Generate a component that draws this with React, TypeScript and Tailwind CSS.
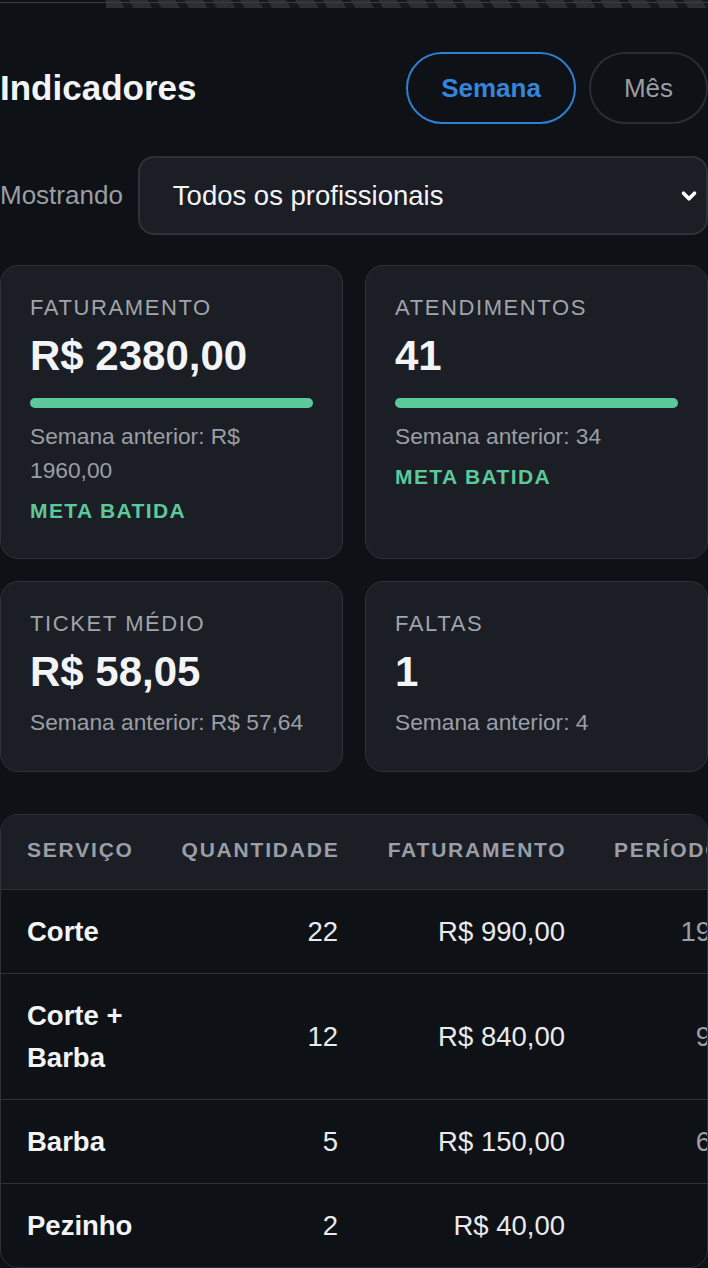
import { ChevronDown } from 'lucide-react';

const kpis = [
  {
    label: 'Faturamento',
    value: 'R$ 2380,00',
    previous: 'Semana anterior: R$ 1960,00',
    progress: 100,
    hit: true,
  },
  {
    label: 'Atendimentos',
    value: '41',
    previous: 'Semana anterior: 34',
    progress: 100,
    hit: true,
  },
  {
    label: 'Ticket médio',
    value: 'R$ 58,05',
    previous: 'Semana anterior: R$ 57,64',
  },
  {
    label: 'Faltas',
    value: '1',
    previous: 'Semana anterior: 4',
  },
];

const rows = [
  { name: 'Corte', qty: '22', total: 'R$ 990,00', prev: '19' },
  { name: 'Corte + Barba', qty: '12', total: 'R$ 840,00', prev: '9' },
  { name: 'Barba', qty: '5', total: 'R$ 150,00', prev: '6' },
  { name: 'Pezinho', qty: '2', total: 'R$ 40,00', prev: '' },
];

type Kpi = (typeof kpis)[number];

function KpiCard({ kpi }: { kpi: Kpi }) {
  return (
    <div className="rounded-[18px] border border-[#2e3238] bg-[#1b1e24] px-[29px] pt-[27px] pb-[32px]">
      <div className="text-[22px] leading-[30px] uppercase tracking-[1.6px] text-[#a0a4ab]">
        {kpi.label}
      </div>
      <div className="mt-[8px] text-[42px] leading-[50px] font-bold text-[#f3f4f6]">{kpi.value}</div>
      {kpi.progress !== undefined && (
        <div className="mt-[17px] h-[10px] rounded-full bg-[#2e3238]">
          <div className="h-full rounded-full bg-[#5bc99a]" style={{ width: `${kpi.progress}%` }} />
        </div>
      )}
      <div
        className={
          kpi.progress !== undefined
            ? 'mt-[11px] text-[22.75px] leading-[34px] text-[#9a9ea6]'
            : 'mt-[8px] text-[22.75px] leading-[34px] text-[#9a9ea6]'
        }
      >
        {kpi.previous}
      </div>
      {kpi.hit && (
        <div className="mt-[9px] text-[21px] leading-[30px] font-bold tracking-[1.4px] text-[#5bc99a]">
          META BATIDA
        </div>
      )}
    </div>
  );
}

export default function App() {
  return (
    <div className="min-h-[1268px] bg-[#0e1115] font-['Liberation_Sans',Arial,sans-serif] text-[#f3f4f6]">
      <div className="relative h-[8px]">
        <div className="ml-[106px] h-full bg-[repeating-linear-gradient(60deg,#2b2f35_0px,#2b2f35_16px,#15181c_16px,#15181c_24px)]" />
        <div className="absolute left-0 right-0 top-[2px] h-px bg-[#3a3e44]" />
      </div>

      <div className="mt-[44px] flex items-center justify-between">
        <h1 className="text-[35px] leading-[44px] font-bold">Indicadores</h1>
        <div className="flex gap-[13px]">
          <button className="h-[72px] rounded-full border-2 border-[#2f7fd3] px-[33px] text-[26px] font-bold text-[#3585dc]">
            Semana
          </button>
          <button className="h-[72px] rounded-full border-2 border-[#2a2d32] px-[33px] text-[26px] text-[#9a9ea6]">
            Mês
          </button>
        </div>
      </div>

      <div className="mt-[32px] flex items-center gap-[15px]">
        <span className="text-[26px] text-[#9a9ea6]">Mostrando</span>
        <div className="flex h-[79px] flex-1 items-center justify-between rounded-[16px] border-2 border-[#2e3238] bg-[#1b1e24] pl-[33px] pr-[6px]">
          <span className="text-[27.5px] text-[#f3f4f6]">Todos os profissionais</span>
          <ChevronDown size={22} strokeWidth={4} className="text-white" />
        </div>
      </div>

      <div className="mt-[30px] grid grid-cols-2 gap-[22px]">
        {kpis.map((k) => (
          <KpiCard key={k.label} kpi={k} />
        ))}
      </div>

      <div className="mt-[42px] overflow-hidden rounded-[18px] border border-[#2e3238]">
        <table className="w-[736px] table-fixed border-collapse">
          <colgroup>
            <col className="w-[156px]" />
            <col className="w-[207px]" />
            <col className="w-[227px]" />
            <col className="w-[146px]" />
          </colgroup>
          <thead>
            <tr className="border-b border-[#2e3238] bg-[#1b1e24] text-[21px] leading-[34px] font-bold uppercase tracking-[1.8px] text-[#9a9ea6]">
              <th className="pl-[26px] pr-[20px] pt-[18px] pb-[22px] text-left font-bold">Serviço</th>
              <th className="pl-[16px] pr-[24.5px] pt-[18px] pb-[22px] text-right font-bold">Quantidade</th>
              <th className="pl-[16px] pr-[24.5px] pt-[18px] pb-[22px] text-right font-bold">Faturamento</th>
              <th className="whitespace-nowrap pl-[23px] pt-[18px] pb-[22px] text-left font-bold">
                Período anterior
              </th>
            </tr>
          </thead>
          <tbody>
            {rows.map((r, i) => (
              <tr
                key={r.name}
                className={i < rows.length - 1 ? 'border-b border-[#2e3238]' : ''}
              >
                <td className="pl-[26px] pr-[24px] py-[20.5px] text-[27.5px] leading-[42px] font-bold text-[#f3f4f6]">
                  {r.name}
                </td>
                <td className="pr-[26px] py-[20.5px] text-right text-[27.5px] leading-[42px] text-[#e8eaed]">
                  {r.qty}
                </td>
                <td className="whitespace-nowrap pr-[26px] py-[20.5px] text-right text-[27.5px] leading-[42px] text-[#e8eaed]">
                  {r.total}
                </td>
                <td className="pr-[26px] py-[20.5px] text-right text-[27.5px] leading-[42px] text-[#9a9ea6]">
                  {r.prev}
                </td>
              </tr>
            ))}
          </tbody>
        </table>
      </div>
    </div>
  );
}
